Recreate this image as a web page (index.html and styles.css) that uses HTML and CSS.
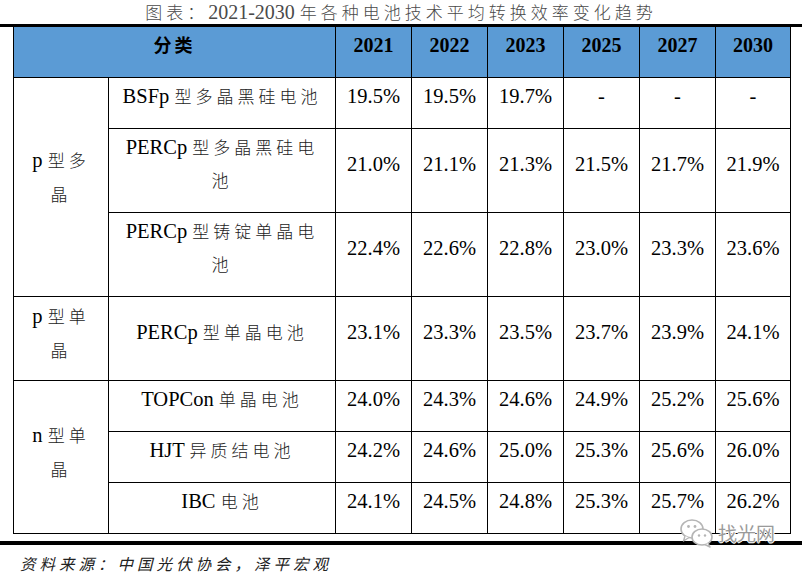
FILE: index.html
```html
<!DOCTYPE html>
<html lang="zh-CN">
<head>
<meta charset="utf-8">
<title>2021-2030 年各种电池技术平均转换效率变化趋势</title>
<link rel="stylesheet" href="styles.css">
</head>
<body>
<div class="page">
  <h1 class="title"><span class="zh">图表：</span><span class="en">2021-2030 </span><span class="zh">年各种电池技术平均转换效率变化趋势</span></h1>
  <div class="rule rule-top"></div>
  <table class="data">
    <colgroup>
      <col class="c-cat"><col class="c-name">
      <col class="c-yr"><col class="c-yr"><col class="c-yr"><col class="c-yr"><col class="c-yr"><col class="c-yr-last">
    </colgroup>
    <thead>
      <tr>
        <th colspan="2"><span class="zh">分类</span></th>
        <th>2021</th><th>2022</th><th>2023</th><th>2025</th><th>2027</th><th>2030</th>
      </tr>
    </thead>
    <tbody>
      <tr>
        <td rowspan="3" class="cat cat-high"><span class="en">p </span><span class="zh">型多</span><br><span class="zh">晶</span></td>
        <td><span class="en">BSFp </span><span class="zh">型多晶黑硅电池</span></td>
        <td>19.5%</td><td>19.5%</td><td>19.7%</td><td>-</td><td>-</td><td>-</td>
      </tr>
      <tr>
        <td><span class="en">PERCp </span><span class="zh">型多晶黑硅电</span><br><span class="zh">池</span></td>
        <td>21.0%</td><td>21.1%</td><td>21.3%</td><td>21.5%</td><td>21.7%</td><td>21.9%</td>
      </tr>
      <tr>
        <td><span class="en">PERCp </span><span class="zh">型铸锭单晶电</span><br><span class="zh">池</span></td>
        <td>22.4%</td><td>22.6%</td><td>22.8%</td><td>23.0%</td><td>23.3%</td><td>23.6%</td>
      </tr>
      <tr>
        <td class="cat"><span class="en">p </span><span class="zh">型单</span><br><span class="zh">晶</span></td>
        <td><span class="en">PERCp </span><span class="zh">型单晶电池</span></td>
        <td>23.1%</td><td>23.3%</td><td>23.5%</td><td>23.7%</td><td>23.9%</td><td>24.1%</td>
      </tr>
      <tr>
        <td rowspan="3" class="cat"><span class="en">n </span><span class="zh">型单</span><br><span class="zh">晶</span></td>
        <td><span class="en">TOPCon </span><span class="zh">单晶电池</span></td>
        <td>24.0%</td><td>24.3%</td><td>24.6%</td><td>24.9%</td><td>25.2%</td><td>25.6%</td>
      </tr>
      <tr>
        <td><span class="en">HJT </span><span class="zh">异质结电池</span></td>
        <td>24.2%</td><td>24.6%</td><td>25.0%</td><td>25.3%</td><td>25.6%</td><td>26.0%</td>
      </tr>
      <tr>
        <td><span class="en">IBC </span><span class="zh">电池</span></td>
        <td>24.1%</td><td>24.5%</td><td>24.8%</td><td>25.3%</td><td>25.7%</td><td>26.2%</td>
      </tr>
    </tbody>
  </table>
  <div class="rule rule-bottom"></div>
  <p class="source">资料来源：中国光伏协会，泽平宏观</p>
  <div class="watermark">
    <svg class="wm-icon" width="34" height="30" viewBox="0 0 34 30" aria-hidden="true">
      <ellipse cx="12" cy="11" rx="11" ry="9" fill="#fff" stroke="#b5b5b5" stroke-width="1.6"/>
      <path d="M5 18 L3.5 23 L9 19.5" fill="#fff" stroke="#b5b5b5" stroke-width="1.4" stroke-linejoin="round"/>
      <ellipse cx="22" cy="19" rx="10" ry="8" fill="#fff" stroke="#b5b5b5" stroke-width="1.6"/>
      <path d="M28 25 L30 29 L25 26.5" fill="#fff" stroke="#b5b5b5" stroke-width="1.4" stroke-linejoin="round"/>
      <circle cx="8.5" cy="8.5" r="1.4" fill="#b5b5b5"/>
      <circle cx="15" cy="8.5" r="1.4" fill="#b5b5b5"/>
      <circle cx="19" cy="17.5" r="1.2" fill="#b5b5b5"/>
      <circle cx="25" cy="17.5" r="1.2" fill="#b5b5b5"/>
    </svg>
    <span class="wm-text">找光网</span>
  </div>
</div>
</body>
</html>
```
FILE: styles.css
```css
html, body {
  margin: 0;
  padding: 0;
  background: #ffffff;
}

body {
  font-family: "Liberation Serif", "Noto Sans CJK SC", serif;
  color: #000;
}

.page {
  position: relative;
  width: 802px;
  height: 573px;
  overflow: hidden;
}

.zh {
  font-family: "Noto Sans CJK SC", sans-serif;
  font-size: 17px;
  font-weight: 300;
  letter-spacing: 4px;
  line-height: 1;
  color: #222;
}

.en {
  font-family: "Liberation Serif", serif;
}

.title {
  margin: 0;
  height: 24px;
  line-height: 24px;
  text-align: center;
  font-weight: normal;
  font-size: 20px;
  color: #4a4a4a;
  white-space: nowrap;
}

.title .zh {
  color: #4a4a4a;
}

.rule {
  background: #000;
}

.rule-top {
  height: 3px;
}

.rule-bottom {
  height: 4px;
  margin-top: 7px;
}

.data {
  margin-left: 13px;
  width: 777px;
  table-layout: fixed;
  border-collapse: collapse;
}

.c-cat { width: 95px; }
.c-name { width: 227px; }
.c-yr { width: 76px; }
.c-yr-last { width: 75px; }

.data th,
.data td {
  border: 1px solid #000;
  padding: 2px 2px 15px;
  line-height: 33px;
  text-align: center;
  vertical-align: middle;
  font-size: 20.5px;
  white-space: nowrap;
}

.data thead th {
  background: #5b9bd5;
  border-top: none;
  font-weight: bold;
  font-size: 20px;
}

.data thead th .zh {
  font-weight: bold;
  font-size: 18px;
  letter-spacing: 3px;
  color: #000;
}

.data td.cat {
  padding-bottom: 13px;
  line-height: 34px;
}

.data td.cat-high {
  padding-bottom: 23px;
}

.source {
  margin: 7px 0 0;
  padding-left: 20px;
  line-height: 22px;
  font-family: "Noto Sans CJK SC", sans-serif;
  font-style: italic;
  font-size: 15.5px;
  letter-spacing: 4px;
  color: #222;
}

.watermark {
  position: absolute;
  left: 680px;
  top: 518px;
  display: flex;
  align-items: center;
  gap: 4px;
}

.wm-text {
  font-family: "Noto Sans CJK SC", sans-serif;
  font-size: 19px;
  line-height: 26px;
  color: #9a9a9a;
  text-shadow: 1px 0 0 #fff, -1px 0 0 #fff, 0 1px 0 #fff, 0 -1px 0 #fff;
}
```
